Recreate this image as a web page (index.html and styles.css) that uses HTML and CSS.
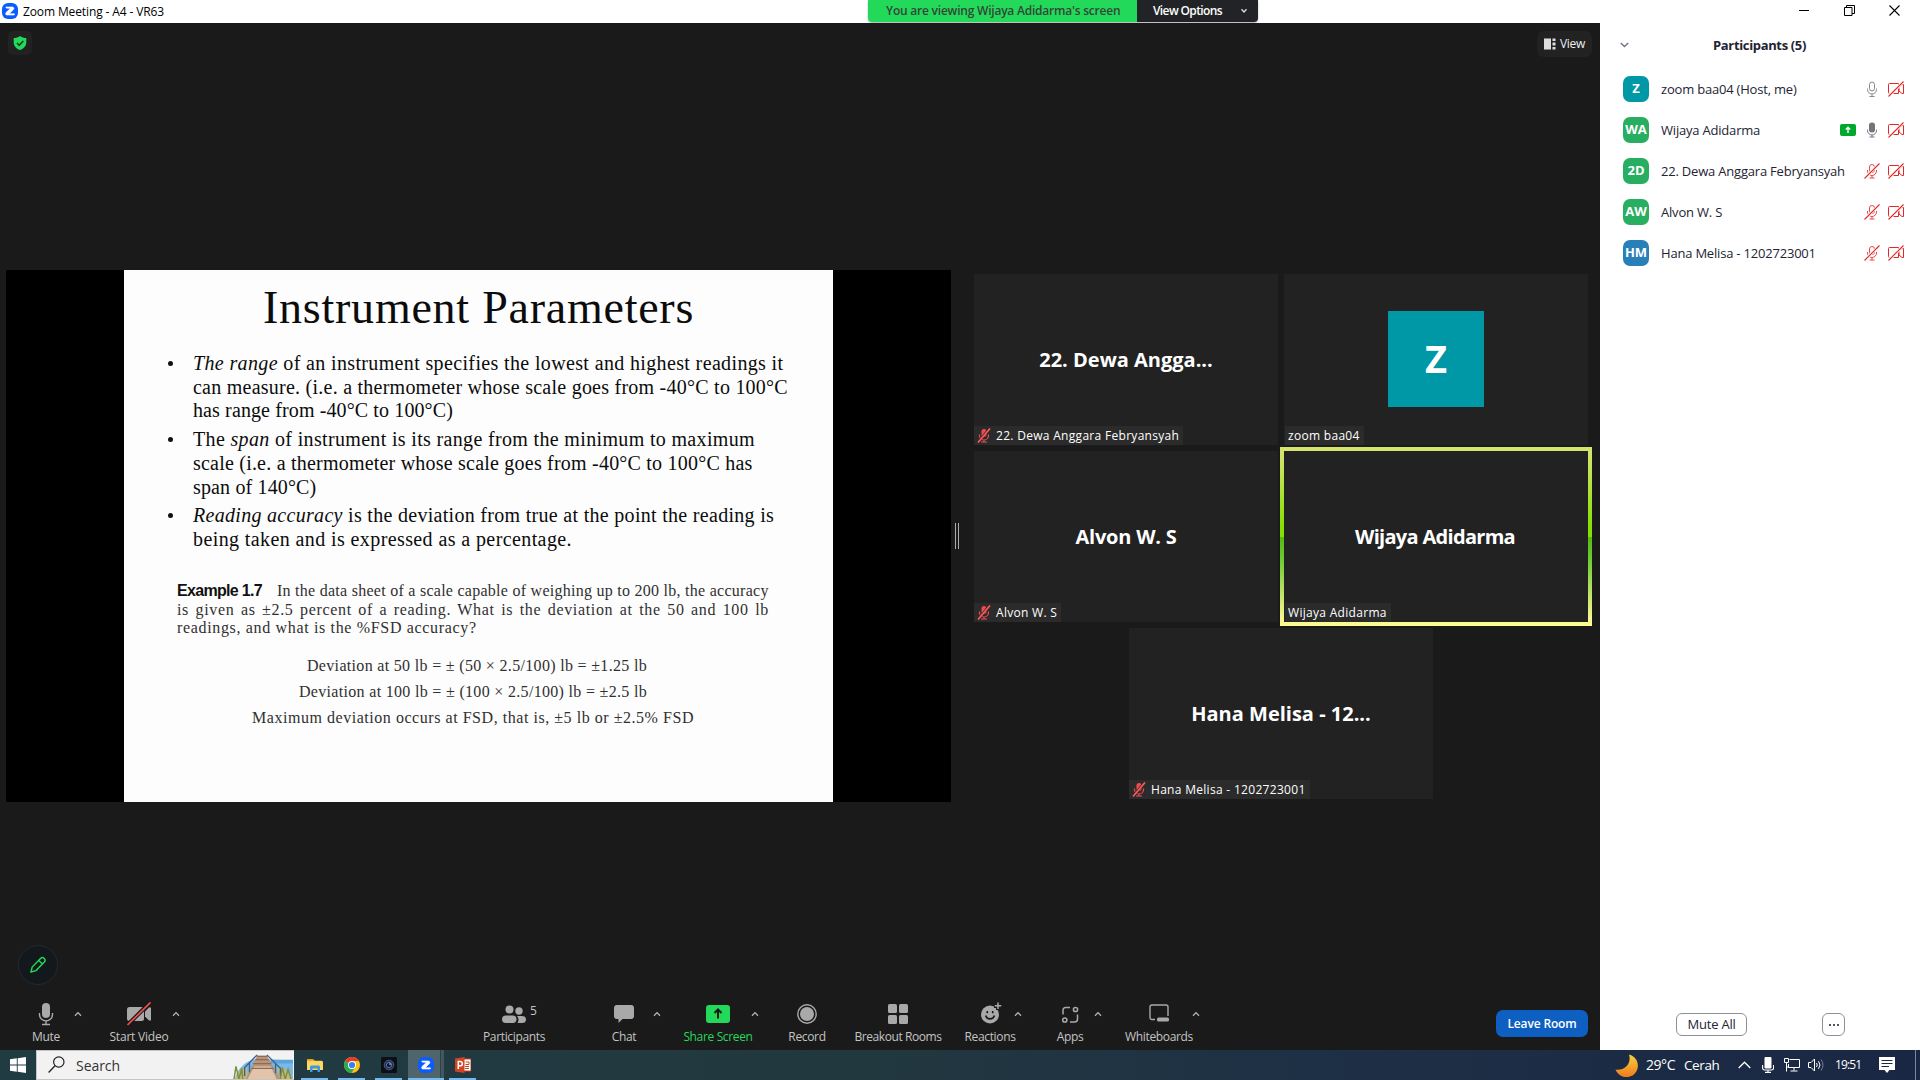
FILE: index.html
```html
<!DOCTYPE html>
<html lang="en">
<head>
<meta charset="utf-8">
<title>Zoom Meeting - A4 - VR63</title>
<link rel="stylesheet" href="styles.css">
</head>
<body>
<svg class="defs" aria-hidden="true">
  <symbol id="mic-red" viewBox="0 0 16 16"><rect x="5.5" y="1.5" width="5" height="8" rx="2.5" fill="none" stroke="#e8474b"/><path d="M3.5 7v1a4.5 4.5 0 0 0 9 0V7M8 12.5V15M5.500 15h5" fill="none" stroke="#e8474b"/><path d="M.8 15.500 15 .8" stroke="#fff" stroke-width="2.600"/><path d="M.5 15.500 15.500.5" stroke="#e02828" stroke-width="1.100"/></symbol>
  <symbol id="cam-red" viewBox="0 0 16 16"><path d="M1.500 2.500h9v10h-9a1 1 0 0 1-1-1v-8a1 1 0 0 1 1-1zM11 6l3-2.500h1.500v9H14L11 10z" fill="none" stroke="#e02828"/><path d="M1 15 15 1" stroke="#fff" stroke-width="3"/><path d="M.5 15.500 15.500.5" stroke="#e02828" stroke-width="1.100"/></symbol>
  <symbol id="mic-tile" viewBox="0 0 14 15"><rect x="4.500" y="1" width="5" height="8" rx="2.500" fill="#f04c50"/><path d="M2.500 6.500v1a4.500 4.500 0 0 0 9 0v-1M7 12v2M4 14h6" fill="none" stroke="#f04c50" stroke-width="1.200"/><path d="M1 14.500 12.500.5" stroke="#2a2a2a" stroke-width="2.600"/><path d="M1 14.500 13 .5" stroke="#ff5a5a" stroke-width="1.700"/></symbol>
  <symbol id="caret" viewBox="0 0 8 6"><path d="M1 4.800 4 1.600l3 3.200" fill="none" stroke="#b4b4b4" stroke-width="1.300"/></symbol>
  <symbol id="zlogo" viewBox="0 0 16 16"><rect width="16" height="16" rx="6" fill="#0b5cff"/><path d="M3.800 4h6.700a1.500 1.500 0 0 1 1 2.500L7.300 10.700h5V12H5a1.400 1.400 0 0 1-1-2.400L8.500 5.300H5.300A1.400 1.400 0 0 1 3.800 4z" fill="#fff" stroke="#fff" stroke-width=".6"/></symbol>
</svg>

<header class="titlebar">
  <svg class="titlebar-logo"><use href="#zlogo"/></svg>
  <span class="titlebar-name">Zoom Meeting - A4 - VR63</span>
  <div class="share-banner">
    <div class="share-status">You are viewing Wijaya Adidarma's screen</div>
    <div class="share-options"><span>View Options</span><svg width="8" height="6" viewBox="0 0 8 6"><path d="m1.500 1.200 2.500 2.800 2.500-2.800" fill="none" stroke="#ddd" stroke-width="1.300"/></svg></div>
  </div>
  <div class="window-buttons">
    <svg width="11" height="11" viewBox="0 0 11 11"><path d="M0 5.500h10" stroke="#000"/></svg>
    <svg width="11" height="11" viewBox="0 0 11 11"><path d="M.5 2.500h7.500v8H.5zM2.500 2.500v-2h8v8H8" fill="none" stroke="#000"/></svg>
    <svg width="11" height="11" viewBox="0 0 11 11"><path d="m.5.5 10 10M10.500.5l-10 10" stroke="#000" stroke-width="1.100"/></svg>
  </div>
</header>

<div class="window">
  <main class="meeting">
    <div class="meeting-top">
      <div class="shield"><svg width="14" height="14" viewBox="0 0 14 14"><path d="M7 0c2 1.500 4 2 6.300 2v4.500c0 3.500-2.500 6-6.300 7.500C3.200 12.500.7 10 .7 6.500V2C3 2 5 1.500 7 0z" fill="#23d959"/><path d="m4 7 2.200 2.200L10.300 5" fill="none" stroke="#16301d" stroke-width="1.400"/></svg></div>
      <div class="view-button"><svg width="12" height="12" viewBox="0 0 12 12"><path d="M0 .5h7v11H0zM8.500.5h3V3h-3zM8.500 4.500h3V7.500h-3zM8.500 9h3v2.500h-3z" fill="#ddd"/></svg><span>View</span></div>
    </div>

    <div class="stage">
      <section class="shared-screen">
        <article class="slide">
          <h1 class="slide-title">Instrument Parameters</h1>
          <ul class="slide-list">
            <li>
              <div class="range-1"><i>The range</i> of an instrument specifies the lowest and highest readings it</div>
              <div class="range-2">can measure. (i.e. a thermometer whose scale goes from -40°C to 100°C</div>
              <div class="range-3">has range from -40°C to 100°C)</div>
            </li>
            <li>
              <div class="span-1">The <i>span</i> of instrument is its range from the minimum to maximum</div>
              <div class="span-2">scale (i.e. a thermometer whose scale goes from -40°C to 100°C has</div>
              <div class="span-3">span of 140°C)</div>
            </li>
            <li>
              <div class="accuracy-1"><i>Reading accuracy</i> is the deviation from true at the point the reading is</div>
              <div class="accuracy-2">being taken and is expressed as a percentage.</div>
            </li>
          </ul>
          <div class="example">
            <div class="example-head"><b>Example 1.7</b><span>In the data sheet of a scale capable of weighing up to 200 lb, the accuracy</span></div>
            <div class="example-full">is given as ±2.5 percent of a reading. What is the deviation at the 50 and 100 lb</div>
            <div class="example-end">readings, and what is the %FSD accuracy?</div>
          </div>
          <div class="results">
            <div class="result-50">Deviation at 50 lb = ± (50 × 2.5/100) lb = ±1.25 lb</div>
            <div class="result-100">Deviation at 100 lb = ± (100 × 2.5/100) lb = ±2.5 lb</div>
            <div class="result-max">Maximum deviation occurs at FSD, that is, ±5 lb or ±2.5% FSD</div>
          </div>
        </article>
      </section>
      <div class="divider"></div>
      <section class="gallery">
        <div class="tile"><span class="tile-name">22. Dewa Angga...</span><span class="tile-label"><svg><use href="#mic-tile"/></svg><span>22. Dewa Anggara Febryansyah</span></span></div>
        <div class="tile"><span class="tile-avatar">Z</span><span class="tile-label plain"><span>zoom baa04</span></span></div>
        <div class="tile"><span class="tile-name tight">Alvon W. S</span><span class="tile-label"><svg><use href="#mic-tile"/></svg><span>Alvon W. S</span></span></div>
        <div class="tile speaking"><span class="tile-name tighter">Wijaya Adidarma</span><span class="tile-label plain"><span>Wijaya Adidarma</span></span></div>
        <div class="tile"><span class="tile-name">Hana Melisa - 12...</span><span class="tile-label"><svg><use href="#mic-tile"/></svg><span>Hana Melisa - 1202723001</span></span></div>
      </section>
    </div>

    <div class="annotate"><svg width="18" height="18" viewBox="0 0 18 18"><path d="M2 16l1.200-5L11.500 2.500a2.500 2.500 0 0 1 3.800 3.600L7 14.600zM9.800 4.500l3.700 3.600" fill="none" stroke="#23d959" stroke-width="1.400"/></svg></div>

    <nav class="toolbar">
      <div class="tool mute"><svg width="16" height="24" viewBox="0 0 16 24"><rect x="4" y="1" width="8" height="15" rx="4" fill="#a9a9a9"/><path d="M1.500 11v1.500a6.500 6.500 0 0 0 13 0V11M8 19v3.500M4 22.500h8" fill="none" stroke="#a9a9a9" stroke-width="1.400"/></svg><span>Mute</span></div>
      <svg class="caret"><use href="#caret"/></svg>
      <div class="tool video"><svg width="26" height="24" viewBox="0 0 26 24"><rect x="1" y="5" width="17" height="14" rx="2.500" fill="#a9a9a9"/><path d="m19 9.500 4-4h2v13h-2l-4-4z" fill="#a9a9a9"/><path d="M1 23.500 24 .5" stroke="#1a1a1a" stroke-width="4"/><path d="M1.500 23 24.500.5" stroke="#f0524f" stroke-width="1.700"/></svg><span>Start Video</span></div>
      <svg class="caret"><use href="#caret"/></svg>
      <div class="tool people"><div class="people-icon"><svg width="24" height="24" viewBox="0 0 24 24"><circle cx="7.500" cy="7.500" r="4" fill="#a9a9a9"/><circle cx="17" cy="9" r="3.700" fill="#a9a9a9"/><rect y="13.500" width="14.500" height="7.500" rx="3.700" fill="#a9a9a9"/><path d="M15 14h5a4 3.500 0 0 1 0 7h-4.500a6 6 0 0 0-.5-7z" fill="#a9a9a9"/></svg><span class="people-count">5</span></div><span>Participants</span></div>
      <div class="tool chat"><svg width="20" height="24" viewBox="0 0 20 24"><path d="M3 3h14a3 3 0 0 1 3 3v8a3 3 0 0 1-3 3H8.500L4.500 21v-4H3a3 3 0 0 1-3-3V6a3 3 0 0 1 3-3z" fill="#a9a9a9"/></svg><span>Chat</span></div>
      <svg class="caret chat-caret"><use href="#caret"/></svg>
      <div class="tool share"><svg width="24" height="24" viewBox="0 0 24 24"><rect y="3" width="24" height="18" rx="3" fill="#23d959"/><path d="M12 16.500V8M8.500 11 12 7.500l3.500 3.500" fill="none" stroke="#1a1a1a" stroke-width="2"/></svg><span>Share Screen</span></div>
      <svg class="caret"><use href="#caret"/></svg>
      <div class="tool record"><svg width="20" height="24" viewBox="0 0 20 24"><circle cx="10" cy="12" r="9.200" fill="none" stroke="#a9a9a9" stroke-width="1.400"/><circle cx="10" cy="12" r="7" fill="#a9a9a9"/></svg><span>Record</span></div>
      <div class="tool rooms"><svg width="20" height="24" viewBox="0 0 20 24"><g fill="#a9a9a9"><rect y="2" width="9" height="9" rx="1.500"/><rect x="11" y="2" width="9" height="9" rx="1.500"/><rect y="13" width="9" height="9" rx="1.500"/><rect x="11" y="13" width="9" height="9" rx="1.500"/></g></svg><span>Breakout Rooms</span></div>
      <div class="tool reactions"><svg width="24" height="24" viewBox="0 0 24 24"><circle cx="12" cy="12.500" r="9" fill="#a9a9a9"/><path d="M20 0v8M16 4h8" stroke="#1a1a1a" stroke-width="4"/><path d="M20 .5v6.500M16.800 3.800h6.500" stroke="#a9a9a9" stroke-width="1.500"/><path d="M7.800 13.500a4.300 4 0 0 0 8.500 0M9.300 9v2.200M14.700 9v2.200" fill="none" stroke="#1a1a1a" stroke-width="1.600"/></svg><span>Reactions</span></div>
      <svg class="caret"><use href="#caret"/></svg>
      <div class="tool apps"><svg width="18" height="24" viewBox="0 0 18 24"><g fill="none" stroke="#a9a9a9" stroke-width="1.500"><circle cx="14.500" cy="7.500" r="2.100"/><circle cx="3.800" cy="18" r="2.100"/><path d="M9 5.500H4.500a2.500 2.500 0 0 0-2.500 2.500v4.500M16.500 12.500V17a3 3 0 0 1-3 3H9"/></g></svg><span>Apps</span></div>
      <svg class="caret"><use href="#caret"/></svg>
      <div class="tool boards"><svg width="20" height="24" viewBox="0 0 20 24"><path d="M6 17.500H3A2 2 0 0 1 1 15.500V5a2 2 0 0 1 2-2h14a2 2 0 0 1 2 2v9" fill="none" stroke="#a9a9a9" stroke-width="1.400"/><rect x="8" y="15.500" width="12" height="4" rx="1.500" fill="#a9a9a9"/></svg><span>Whiteboards</span></div>
      <svg class="caret"><use href="#caret"/></svg>
      <button class="leave">Leave Room</button>
    </nav>
  </main>

  <aside class="participants">
    <div class="participants-head"><svg width="9" height="6" viewBox="0 0 9 6"><path d="m.8 1 3.700 3.500L8.200 1" fill="none" stroke="#747487" stroke-width="1.500"/></svg><h2>Participants (5)</h2></div>
    <ul class="people-list">
      <li><span class="avatar teal">Z</span><span class="person">zoom baa04 (Host, me)</span><svg class="st" viewBox="0 0 16 16"><rect x="5.500" y="1" width="5" height="9" rx="2.500" fill="none" stroke="#85858f"/><path d="M3.500 7.500v1a4.500 4.500 0 0 0 9 0v-1M8 13v2.500M5.500 15.500h5" fill="none" stroke="#85858f"/></svg><svg class="st"><use href="#cam-red"/></svg></li>
      <li><span class="avatar green">WA</span><span class="person">Wijaya Adidarma</span><svg class="st" viewBox="0 0 16 16"><rect y="2" width="16" height="12" rx="2" fill="#00a82d"/><path d="M8 11V5.500M5.800 7.500 8 5.300l2.200 2.200" fill="none" stroke="#fff" stroke-width="1.400"/></svg><svg class="st" viewBox="0 0 16 16"><rect x="5" y=".5" width="6" height="10" rx="2.700" fill="#74747f"/><path d="M3.500 7.500v1a4.500 4.500 0 0 0 9 0v-1M8 13v2M5.500 15h5" fill="none" stroke="#74747f"/></svg><svg class="st"><use href="#cam-red"/></svg></li>
      <li><span class="avatar green">2D</span><span class="person">22. Dewa Anggara Febryansyah</span><svg class="st"><use href="#mic-red"/></svg><svg class="st"><use href="#cam-red"/></svg></li>
      <li><span class="avatar green">AW</span><span class="person">Alvon W. S</span><svg class="st"><use href="#mic-red"/></svg><svg class="st"><use href="#cam-red"/></svg></li>
      <li><span class="avatar blue">HM</span><span class="person">Hana Melisa - 1202723001</span><svg class="st"><use href="#mic-red"/></svg><svg class="st"><use href="#cam-red"/></svg></li>
    </ul>
    <div class="participants-actions"><button class="mute-all">Mute All</button><button class="more"><svg width="10" height="2" viewBox="0 0 10 2"><path d="M0 0h2v2H0zM4 0h2v2H4zM8 0h2v2H8z" fill="#55555f"/></svg></button></div>
  </aside>
</div>

<footer class="taskbar">
  <svg class="start" viewBox="0 0 16 16"><path d="M0 2.300 6.800 1.300v6.300H0zM7.700 1.200 16 0v7.600H7.700zM0 8.500h6.800v6.300L0 13.800zM7.700 8.500H16V16l-8.300-1.200z" fill="#fff"/></svg>
  <div class="search">
    <svg width="17" height="18" viewBox="0 0 17 18"><circle cx="10.800" cy="6" r="5.200" fill="none" stroke="#222" stroke-width="1.200"/><path d="M7 9.800.6 16.500" stroke="#222" stroke-width="1.300"/></svg>
    <span class="search-text">Search</span>
    <svg class="search-art" viewBox="0 0 62 29"><path d="M2 29C5 17 14 9 27 8l35 2v19z" fill="#78b9e6"/><path d="M40 9h22v4H38z" fill="#5aa5dc"/><path d="M14 17 7 20 2 29h14zM46 16l9 4 7 9H48z" fill="#c3b878"/><path d="M25 5h10l14 24H13z" fill="#b99478"/><path d="M22 16h17l6 13H15z" fill="#e2c4ab"/><path d="M24.500 5.500h11M23 9h14M20.500 13h19M19 18h23" stroke="#8b6d55" stroke-width="1.300"/><path d="M25 4 12 17v9M17 12v10M35 4l14 14v8M44 13v10" fill="none" stroke="#3f6189" stroke-width="1.400"/><path d="m1 29 2-13 3 13 3-11 1 11M49 29l2-12 3 12 3-10 3 10" fill="none" stroke="#7f8f3a" stroke-width="1.500"/></svg>
  </div>
  <div class="app folder"><svg viewBox="0 0 16 16"><path d="M0 2h6l1.500 1.500V5H0z" fill="#e0a010"/><path d="M0 3.800h14.500A1.500 1.500 0 0 1 16 5.300V13H0z" fill="#fdd663"/><path d="M3 15V10a1.500 1.500 0 0 1 1.500-1.500h7A1.500 1.500 0 0 1 13 10v5h-2.500v-3.500h-5V15z" fill="#3b9ae0"/></svg></div>
  <div class="app"><svg viewBox="0 0 16 16"><circle cx="8" cy="8" r="8" fill="#fbc116"/><path d="M8 8 1.100 4A8 8 0 0 1 15 4.100H8z" fill="#e33b2e"/><path d="M1.100 4A8 8 0 0 0 7.500 16L11.300 10 8 8z" fill="#2da94f"/><circle cx="8" cy="8" r="4" fill="#fff"/><circle cx="8" cy="8" r="3.100" fill="#3b7ded"/></svg></div>
  <div class="app"><svg viewBox="0 0 16 16"><rect width="16" height="16" rx="1.500" fill="#0c0f15"/><circle cx="8" cy="8" r="4.800" fill="#22314f" stroke="#465a7c"/><circle cx="8" cy="8" r="2.600" fill="#0d1220" stroke="#5a79a8"/><circle cx="9" cy="7" r="1.200" fill="#7a6cc0"/></svg></div>
  <div class="app active"><svg><use href="#zlogo"/></svg></div>
  <div class="app ppt"><svg viewBox="0 0 16 16"><path d="M8 2h8v12H8z" fill="#fff" stroke="#d04423"/><path d="M10.500 5H14v2.500h-3.500M10 9.500h4M10 11.500h4" fill="none" stroke="#d04423"/><path d="M0 1.500 9.500 0v16L0 14.500z" fill="#d04423"/><path d="M3.300 12V4.500h1.900a2 2 0 0 1 0 4.300H3.300" fill="none" stroke="#fff" stroke-width="1.500"/></svg></div>
  <div class="tray">
    <svg class="moon" viewBox="0 0 23 23"><defs><linearGradient id="moonfill" x1="0" y1="0" x2="0" y2="1"><stop offset="0" stop-color="#f8cf3e"/><stop offset="1" stop-color="#ef7b1c"/></linearGradient></defs><path d="M14 .5a11.500 11.500 0 1 1-13.500 15C9 17 17 10 14 .5z" fill="url(#moonfill)"/></svg>
    <span class="temp">29°C</span><span class="sky">Cerah</span>
    <svg class="t-caret" viewBox="0 0 13 8"><path d="m.7 7 5.800-5.800L12.300 7" fill="none" stroke="#fff" stroke-width="1.300"/></svg>
    <svg class="t-mic" viewBox="0 0 12 16"><rect x="2.500" width="7" height="11.500" rx="1" fill="#fff"/><path d="M.6 8v3a2 2 0 0 0 2 2h7a2 2 0 0 0 2-2V8M6 13v2.500M3 15.400h6" fill="none" stroke="#fff" stroke-width="1.100"/></svg>
    <svg class="t-net" viewBox="0 0 16 14"><path d="M5.500 1.500h10v8h-11V6M10 9.500v3M6.500 13h7M.5.500h4v4h-4zM2.500 4.500V9h2M2.500 9v4.500" fill="none" stroke="#fff"/></svg>
    <svg class="t-sound" viewBox="0 0 17 14"><path d="M.5 4.500h2.500L6.500 1v12L3 9.500H.5z" fill="none" stroke="#fff"/><path d="M8.500 5q1.500 2 0 4M10.500 3.200q3 3.800 0 7.600" fill="none" stroke="#fff"/><path d="M13 1.500q4 5.500 0 11" fill="none" stroke="#77829a"/></svg>
    <span class="clock">19:51</span>
    <svg class="t-note" viewBox="0 0 16 16"><path d="M0 0h16v13h-5.500L8 16l-2.500-3H0z" fill="#fff"/><path d="M2.500 3.500h11M2.500 6.500h11M2.500 9.500h7.500" stroke="#1b2a45"/></svg>
    <span class="peek"></span>
  </div>
</footer>
</body>
</html>
```
FILE: styles.css
```css
* { box-sizing: border-box; }
body { margin: 0; width: 1920px; height: 1080px; overflow: hidden; background: #fff; color: #232333; font: 12px/16px "Open Sans", "Noto Sans", sans-serif; white-space: nowrap; display: flex; flex-direction: column; }
svg { display: block; flex: none; }
h1, h2, ul { margin: 0; padding: 0; font-weight: inherit; list-style: none; }
button { font: inherit; padding: 0; display: flex; align-items: center; justify-content: center; }
.defs { position: absolute; width: 0; height: 0; }

.titlebar { height: 23px; display: flex; align-items: flex-start; color: #000; }
.titlebar-logo { width: 16px; height: 16px; margin: 3px 5px 0 2px; }
.titlebar-name { width: 845px; padding-top: 4px; letter-spacing: -.12px; }
.share-banner { display: flex; height: 22px; width: 390px; border-radius: 0 0 4px 4px; overflow: hidden; font-size: 12px; font-weight: 600; line-height: 22px; box-shadow: 0 1px 2px #0005; }
.share-status { width: 269px; padding-left: 18px; background: #23d959; color: #33463a; letter-spacing: -.22px; }
.share-options { width: 121px; background: #222326; color: #fff; padding: 0 10px 0 16px; display: flex; justify-content: space-between; align-items: center; letter-spacing: -.62px; }
.window-buttons { display: flex; gap: 34px; margin: 5px 20px 0 auto; }

.window { height: 1027px; display: flex; }
.meeting { width: 1600px; background: #1a1a1a; display: flex; flex-direction: column; }
.meeting-top { height: 247px; padding: 8px 8px 0; display: flex; justify-content: space-between; align-items: flex-start; }
.shield { width: 24px; height: 24px; border-radius: 5px; background: #222; display: flex; align-items: center; justify-content: center; }
.view-button { width: 55px; height: 26px; border-radius: 7px; background: #222; color: #eee; display: flex; align-items: center; gap: 4px; padding-left: 7px; letter-spacing: -.3px; }

.stage { height: 532px; display: flex; padding-left: 6px; }
.shared-screen { width: 945px; background: #000; padding-left: 118px; }
.slide { width: 709px; height: 532px; background: #fdfdfd; color: #0c0c0c; font-family: "Liberation Serif", serif; padding-top: 13px; }
.slide-title { font-size: 46px; line-height: 50px; padding-left: 139px; letter-spacing: .76px; }
.slide-list { margin-top: 19px; padding-left: 69px; font-size: 20px; line-height: 23.7px; }
.slide-list li { position: relative; margin-bottom: 5px; }
.slide-list li::before { content: ""; position: absolute; left: -25px; top: 9px; width: 5px; height: 5px; border-radius: 50%; background: #111; }
.range-1 { letter-spacing: .36px; }
.range-2 { letter-spacing: .245px; }
.range-3 { letter-spacing: .115px; }
.span-1 { letter-spacing: .34px; }
.span-2 { letter-spacing: .215px; }
.span-3 { letter-spacing: .15px; }
.accuracy-1 { letter-spacing: .3px; }
.accuracy-2 { letter-spacing: .4px; }
.example { margin-top: 30.700px; padding-left: 53px; font-size: 16px; line-height: 18.500px; color: #303030; }
.example-head { display: flex; letter-spacing: .265px; }
.example-head b { width: 100px; font-family: "Liberation Sans", sans-serif; color: #111; letter-spacing: -.68px; }
.example-full { width: 592px; letter-spacing: .66px; text-align-last: justify; }
.example-end { letter-spacing: .66px; }
.results { margin-top: 15.500px; font-size: 16px; line-height: 26px; color: #303030; }
.result-50 { padding-left: 183px; letter-spacing: .32px; }
.result-100 { padding-left: 175px; letter-spacing: .313px; }
.result-max { padding-left: 128px; letter-spacing: .541px; }

.divider { width: 4px; height: 26px; margin: 253px 15px 0 4px; border: solid #aaa; border-width: 0 1px; }
.gallery { width: 614px; height: 525px; margin-top: 4px; display: flex; flex-wrap: wrap; gap: 6px; justify-content: center; }
.tile { position: relative; width: 304px; height: 171px; background: #222; color: #fff; display: flex; align-items: center; justify-content: center; }
.tile-name { font-size: 20px; font-weight: 700; line-height: 28px; }
.tight { letter-spacing: -.22px; }
.tighter { padding-right: 2px; letter-spacing: -.69px; }
.tile-avatar { width: 96px; height: 96px; margin-bottom: 2px; background: #0097a7; font-size: 38px; font-weight: 700; line-height: 94px; text-align: center; }
.tile-label { position: absolute; left: 0; bottom: 0; height: 19px; padding-right: 4px; background: #2b2b2b; display: flex; align-items: center; line-height: 19px; letter-spacing: .3px; }
.tile-label svg { width: 14px; height: 15px; margin: 0 5px 0 3px; }
.tile-label.plain { left: 1px; padding-left: 3px; }
.speaking::after { content: ""; position: absolute; inset: -4px; border: 4px solid; border-image: linear-gradient(#d3e36c, #d3e36c 5%, #86e000 45%, #86e000 50%, #55bb10 50%, #6cc832 62%, #f3f58c 95%, #fdfd92) 4; }

.annotate { width: 40px; height: 40px; margin: 143px 0 0 18px; border-radius: 50%; background: #12181b; border: 1px solid #25292d; display: flex; align-items: center; justify-content: center; }
.toolbar { height: 65px; padding: 17px 12px 0 22px; display: flex; align-items: flex-start; color: #c4c4c4; }
.tool { display: flex; flex-direction: column; align-items: center; gap: 3px; letter-spacing: -.35px; }
.caret { width: 8px; height: 6px; margin: 9px 4px 0; }
.mute { width: 48px; }
.video, .share, .boards { width: 58px; margin-left: 24px; }
.video { letter-spacing: -.2px; }
.people { width: 68px; margin-left: 296px; }
.people-icon { position: relative; }
.people-count { position: absolute; left: 28px; top: 1px; }
.chat { width: 48px; margin-left: 52px; }
.chat-caret { margin-left: 5px; }
.share { color: #23d959; }
.record { width: 54px; margin-left: 17px; }
.rooms { width: 96px; margin-left: 16px; letter-spacing: -.43px; }
.reactions, .apps { width: 40px; margin-left: 24px; }
.leave { width: 92px; height: 27px; margin: 8px 0 0 auto; border: 0; border-radius: 7px; background: #0e5fc2; color: #fff; font-weight: 600; letter-spacing: -.16px; }

.participants { width: 320px; display: flex; flex-direction: column; }
.participants-head { height: 45px; padding: 0 0 1px 20px; display: flex; align-items: center; }
.participants-head h2 { font-size: 13px; font-weight: 700; margin-left: 84px; letter-spacing: -.346px; }
.people-list li { height: 41px; padding: 0 16px 0 23px; display: flex; align-items: center; gap: 8px; font-size: 13px; }
.avatar { width: 26px; height: 26px; border-radius: 7px; color: #fff; font-size: 13px; font-weight: 700; line-height: 25px; text-align: center; }
.teal { background: #0097a7; }
.green { background: #27ae60; }
.blue { background: #2980b9; }
.person { flex: 1; margin-left: 4px; letter-spacing: -.2px; }
.st { width: 16px; height: 16px; }
.participants-actions { display: flex; margin: auto 0 14px 76px; gap: 75px; }
.mute-all, .more { height: 23px; border: 1px solid #8f8f99; border-radius: 6px; background: #fff; color: #232333; }
.mute-all { width: 71px; padding-bottom: 2px; font-size: 13px; letter-spacing: -.22px; }
.more { width: 23px; }

.taskbar { height: 30px; display: flex; align-items: center; background: linear-gradient(90deg, #213b42 0, #22383f 45%, #1e3045 68%, #1a2744 100%); color: #fff; font-size: 14px; }
.start { width: 16px; height: 16px; margin: 0 10px; }
.search { width: 258px; height: 30px; background: #f2f2f2; border: 1px solid #c5c5c5; border-right: 0; color: #333; display: flex; align-items: center; padding-left: 11px; }
.search-text { width: 113px; margin: 2px 0 0 11px; flex: 1; letter-spacing: -.05px; }
.search-art { width: 62px; height: 28px; }
.app { width: 27px; height: 30px; margin-left: 10px; border-bottom: 2px solid #76b9ed; display: flex; align-items: center; justify-content: center; padding-top: 2px; }
.app svg { width: 16px; height: 16px; }
.folder { margin-left: 7px; }
.active { width: 36px; margin-left: 6px; background: linear-gradient(90deg, #4f646b 0 32px, #2d4148 32px 33px, #42575f 33px); }
.ppt { margin-left: 5px; }
.tray { margin-left: auto; display: flex; align-items: center; }
.moon { width: 23px; height: 23px; }
.temp { width: 38px; margin-left: 8px; letter-spacing: -.45px; }
.sky { width: 54px; letter-spacing: -.4px; font-size: 13.500px; }
.t-caret { width: 13px; height: 8px; margin-right: 11px; }
.t-mic { width: 12px; height: 16px; margin-right: 10px; }
.t-net { width: 16px; height: 14px; margin-right: 8px; }
.t-sound { width: 17px; height: 14px; margin-right: 10px; }
.clock { width: 44px; font-size: 12px; letter-spacing: -.9px; }
.t-note { width: 16px; height: 16px; margin-right: 20px; }
.peek { width: 1px; height: 30px; background: #7d879a; margin-right: 4px; }
```
